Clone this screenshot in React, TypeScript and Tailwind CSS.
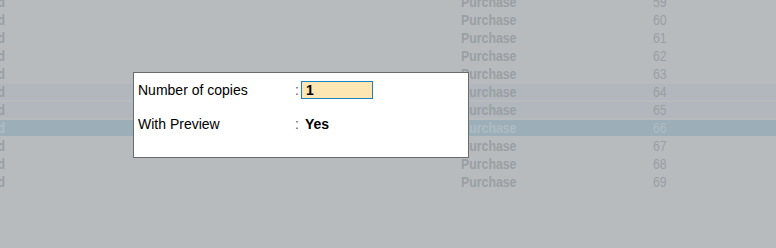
import React from "react";

const rows = [59, 60, 61, 62, 63, 64, 65, 66, 67, 68, 69];

export default function App() {
  return (
    <div
      className="relative w-[776px] h-[248px] overflow-hidden bg-[#b7bbbe]"
      style={{ fontFamily: '"Liberation Sans", Arial, sans-serif' }}
    >
      <div className="flex flex-col mt-[-7px]">
        {rows.map((n) => {
          const band =
            n === 66
              ? "bg-[#9cafb8] text-[#acbcc4]"
              : n === 64 || n === 65
              ? "bg-[#b1b7bc] text-[#9a9fa4]"
              : "text-[#9a9fa4]";
          return (
            <div key={n} className="h-[18px] py-[1px] flex">
              <div className={`flex-1 flex items-center text-[14px] leading-none ${band}`}>
                <div className="w-[5px] shrink-0 flex justify-end overflow-hidden whitespace-nowrap font-bold">
                  <span className="scale-x-[0.88] origin-right">Accepted</span>
                </div>
                <div className="w-[456px] shrink-0"></div>
                <div className="w-[192px] shrink-0 font-bold">
                  <span className="inline-block scale-x-[0.88] origin-left">Purchase</span>
                </div>
                <div>
                  <span className="inline-block scale-x-[0.88] origin-left">{n}</span>
                </div>
              </div>
            </div>
          );
        })}
      </div>

      <div className="absolute left-[133px] top-[72px] w-[336px] h-[86px] bg-white border border-[#6b6b6b] text-[14px] text-black">
        <div className="flex items-center h-[18px] mt-[8px] pl-[4px]">
          <div className="w-[157px]">Number of copies</div>
          <div className="w-[6px] text-[#555]">:</div>
          <div className="w-[72px] h-[18px] bg-[#fde6b2] border border-[#1f7fbf] font-bold pl-[4px] leading-[16px]">
            1
          </div>
        </div>
        <div className="flex items-center h-[18px] mt-[16px] pl-[4px]">
          <div className="w-[157px]">With Preview</div>
          <div className="w-[10px] text-[#555]">:</div>
          <div className="font-bold">Yes</div>
        </div>
      </div>
    </div>
  );
}
